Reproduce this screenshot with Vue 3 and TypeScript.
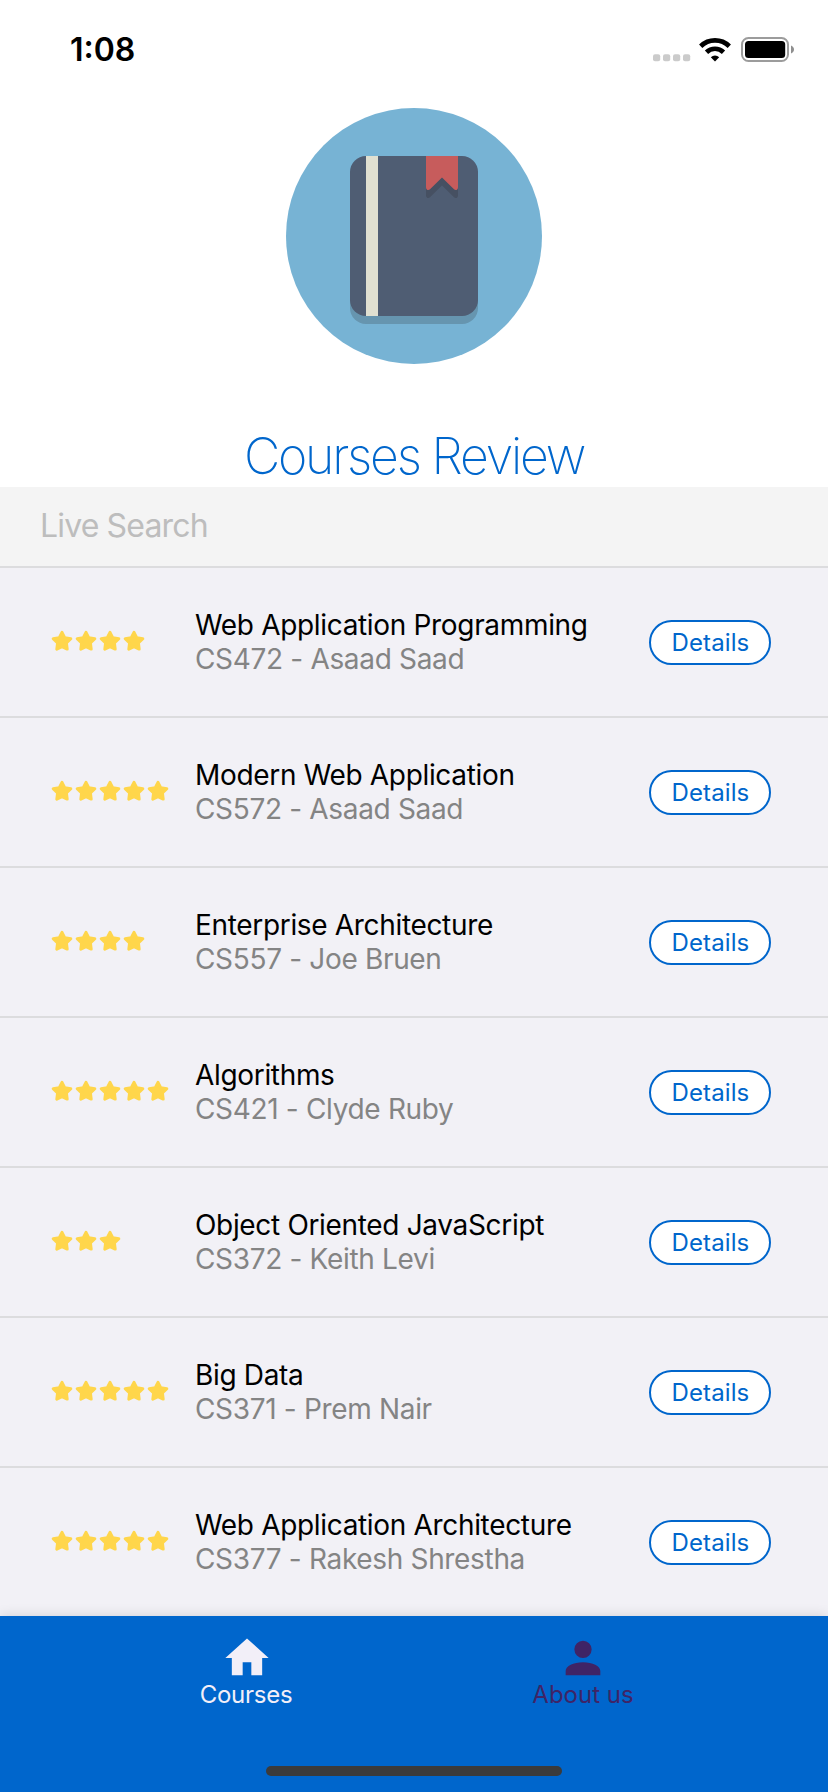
<script setup lang="ts">
interface Course {
  title: string
  code: string
  teacher: string
  rating: number
}

const courses: Course[] = [
  { title: 'Web Application Programming', code: 'CS472', teacher: 'Asaad Saad', rating: 4 },
  { title: 'Modern Web Application', code: 'CS572', teacher: 'Asaad Saad', rating: 5 },
  { title: 'Enterprise Architecture', code: 'CS557', teacher: 'Joe Bruen', rating: 4 },
  { title: 'Algorithms', code: 'CS421', teacher: 'Clyde Ruby', rating: 5 },
  { title: 'Object Oriented JavaScript', code: 'CS372', teacher: 'Keith Levi', rating: 3 },
  { title: 'Big Data', code: 'CS371', teacher: 'Prem Nair', rating: 5 },
  { title: 'Web Application Architecture', code: 'CS377', teacher: 'Rakesh Shrestha', rating: 5 },
]
</script>

<template>
  <div class="screen">
    <header class="status">
      <span class="time">1:08</span>
      <div class="indicators">
        <svg class="dots" width="38" height="8" viewBox="0 0 38 8">
          <rect v-for="n in 4" :key="n" :x="(n - 1) * 10" y="0.2" width="7.2" height="7" rx="2" />
        </svg>
        <svg class="wifi" width="32" height="24" viewBox="0 0 32 24">
          <g fill="none" stroke="#000" stroke-width="4.7">
            <path d="M1.7 8.2A20.6 20.6 0 0 1 30.3 8.2" />
            <path d="M7.5 14.2A12.2 12.2 0 0 1 24.5 14.2" />
          </g>
          <path d="M16 23.5l-4.2-4.2a6 6 0 0 1 8.4 0z" />
        </svg>
        <svg class="battery" width="54" height="26" viewBox="0 0 54 26">
          <rect x="1" y="1" width="46" height="23" rx="6.5" fill="none" stroke="#9c9c9c" stroke-width="2" />
          <rect x="4" y="4" width="40.2" height="17" rx="3.5" />
          <path d="M50 8.5c4 1.5 4 6.500 0 8z" fill="#8f8f8f" />
        </svg>
      </div>
    </header>

    <section class="hero">
      <svg class="logo" width="256" height="256" viewBox="0 0 64 64">
        <circle cx="32" cy="32" r="32" fill="#77b3d4" />
        <rect x="16" y="14" width="32" height="40" rx="4" fill="#231f20" opacity=".2" />
        <rect x="16" y="12" width="32" height="40" rx="4" fill="#4f5d73" />
        <path fill="#e0e0d1" d="M20 12h3v40h-3z" />
        <path fill="#231f20" opacity=".2" d="M35 12v9.800c0 .7.600.9 1 .500l3-2.900 3 2.900c.4.400 1 .2 1-.500V12z" />
        <path fill="#c75c5c" d="M35 12v7.800c0 .7.600.9 1 .500l3-2.900 3 2.900c.4.400 1 .2 1-.500V12z" />
      </svg>
      <h1>Courses Review</h1>
    </section>

    <input class="search" type="text" placeholder="Live Search" />

    <main class="list">
      <article v-for="course in courses" :key="course.code" class="row">
        <div class="stars">
          <svg v-for="n in course.rating" :key="n" width="24" height="24" viewBox="0 0 24 24">
            <path
              d="M12 3.300L14.700 8.700 20.800 9.700 16.400 14 17.200 20.100 12 17.600 6.800 20.100 7.600 14 3.200 9.700 9.300 8.700z"
            />
          </svg>
        </div>
        <div class="info">
          <div class="title">{{ course.title }}</div>
          <div class="sub">{{ course.code }} - {{ course.teacher }}</div>
        </div>
        <button class="details" type="button">Details</button>
      </article>
    </main>

    <nav class="tabs">
      <div class="tab active">
        <svg width="52" height="52" viewBox="0 0 24 24"><path d="M10 20v-6h4v6h5v-8h3L12 3 2 12h3v8z" /></svg>
        <span>Courses</span>
      </div>
      <div class="tab">
        <svg width="52" height="52" viewBox="0 0 24 24">
          <path d="M12 4a4 4 0 0 1 0 8 4 4 0 0 1 0-8zM12 14c4.420 0 8 1.790 8 4v2H4v-2c0-2.210 3.580-4 8-4z" />
        </svg>
        <span>About us</span>
      </div>
      <div class="home-bar"></div>
    </nav>
  </div>
</template>

<style>
body {
  margin: 0;
}
</style>

<style scoped>
.screen {
  width: 828px;
  height: 1792px;
  display: flex;
  flex-direction: column;
  overflow: hidden;
  background: #fff;
  font-family: Inter, "Liberation Sans", sans-serif;
}
.status {
  height: 108px;
  flex: none;
  display: flex;
  justify-content: space-between;
  align-items: flex-start;
  box-sizing: border-box;
  padding: 30px 33px 0 70px;
}
.time {
  font-size: 32px;
  line-height: 39px;
  font-weight: 600;
}
.indicators {
  display: flex;
  align-items: flex-end;
  height: 32px;
}
.dots {
  fill: #cbcbcb;
  margin-right: 8px;
}
.wifi {
  margin-right: 10px;
}
.battery {
  margin-bottom: -1px;
}
.hero {
  height: 379px;
  flex: none;
  display: flex;
  flex-direction: column;
  align-items: center;
}
h1 {
  margin: 62px 0 0;
  font-size: 50px;
  line-height: 60px;
  font-weight: 200;
  letter-spacing: -2.2px;
  color: #0066cc;
  white-space: nowrap;
}
.search {
  height: 81px;
  flex: none;
  box-sizing: border-box;
  border: 0;
  border-bottom: 2px solid #dcdcde;
  border-radius: 0;
  padding: 0 40px 2px;
  background: #f4f4f4;
  font: 400 32px Inter, "Liberation Sans", sans-serif;
  letter-spacing: -0.85px;
  outline: 0;
}
.search::placeholder {
  color: #bdbdbd;
  opacity: 1;
}
.list {
  flex: 1;
  min-height: 0;
  overflow: hidden;
  background: #f2f1f6;
}
.row {
  height: 150px;
  box-sizing: border-box;
  border-bottom: 2px solid #dcdcde;
  display: flex;
  align-items: center;
  padding: 0 57px 0 50px;
}
.stars {
  width: 145px;
  display: flex;
  flex: none;
  margin-bottom: 2px;
}
.stars path {
  fill: #ffd64b;
  stroke: #ffd64b;
  stroke-width: 3;
  stroke-linejoin: round;
}
.info {
  flex: 1;
  font-size: 28px;
  line-height: 34px;
  letter-spacing: -0.33px;
  white-space: nowrap;
}
.title {
  color: #000;
}
.sub {
  color: #848484;
}
.details {
  width: 122px;
  height: 45px;
  box-sizing: border-box;
  border: 2px solid #0066cc;
  border-radius: 23px;
  background: #fff;
  color: #0066cc;
  padding: 0 0 0 1px;
  font: 400 24px Inter, "Liberation Sans", sans-serif;
  letter-spacing: 0.1px;
  margin-top: 1px;
}
.tabs {
  height: 176px;
  flex: none;
  box-sizing: border-box;
  background: #0066cc;
  box-shadow: 0 0 12px rgba(0, 0, 0, 0.14);
  position: relative;
  display: flex;
  padding: 16px 77px 0 79px;
}
.tab {
  flex: 1;
  display: flex;
  flex-direction: column;
  align-items: center;
  color: #3f2466;
}
.tab.active {
  color: #f2eff8;
}
.tab svg {
  fill: currentColor;
}
.tab span {
  font-size: 24px;
  line-height: 30px;
  margin-top: -4px;
}
.tab.active span {
  letter-spacing: -0.25px;
  margin-right: 2px;
}
.home-bar {
  position: absolute;
  left: 266px;
  bottom: 16px;
  width: 296px;
  height: 10px;
  border-radius: 5px;
  background: #3b3b3b;
}
</style>
